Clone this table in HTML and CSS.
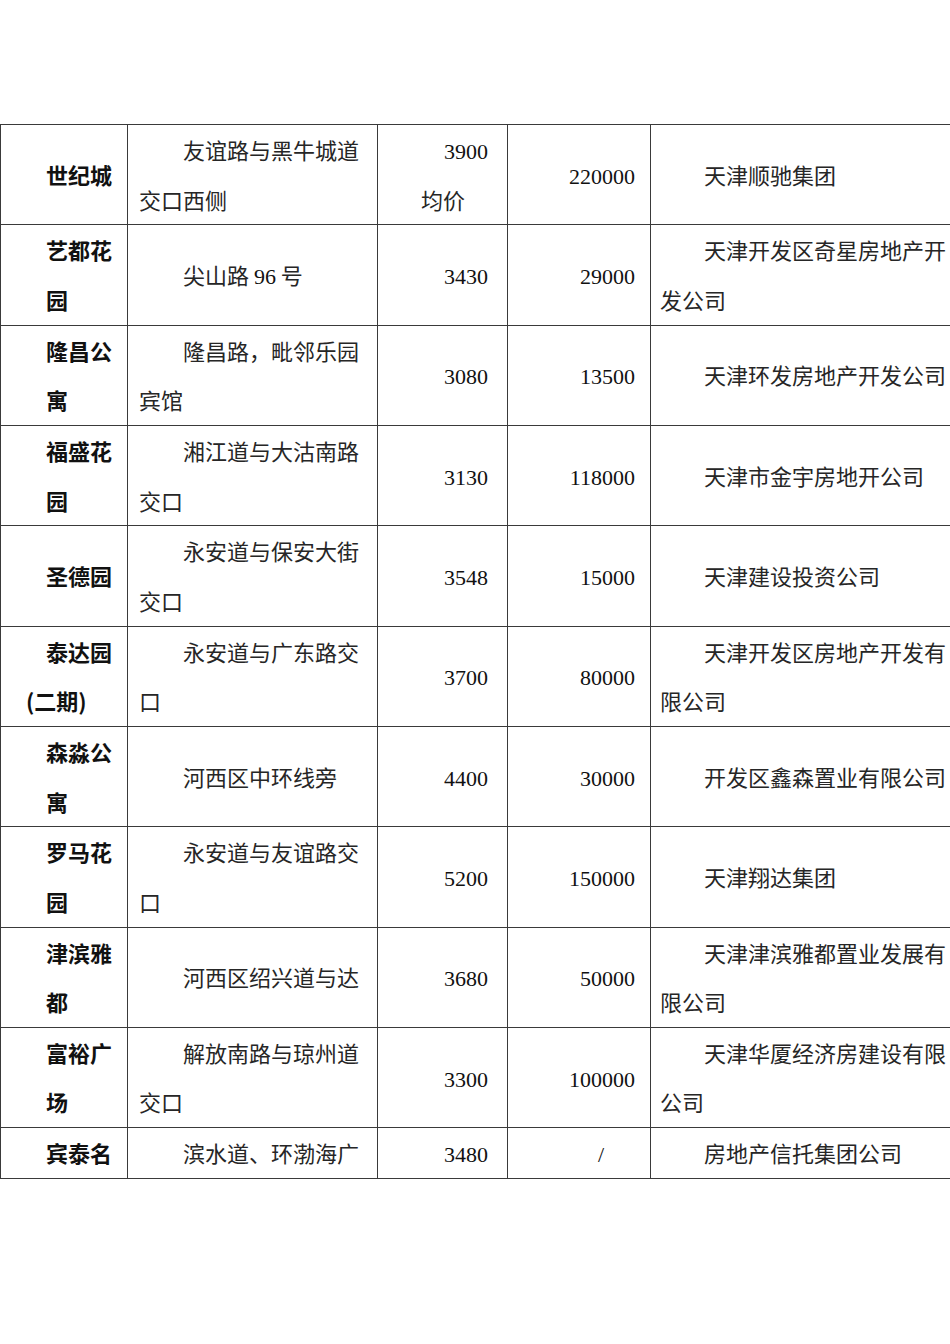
FILE: index.html
```html
<!DOCTYPE html>
<html lang="zh-CN">
<head>
<meta charset="utf-8">
<title>天津楼盘一览</title>
<link rel="stylesheet" href="styles.css">
</head>
<body>
<table class="sheet">
  <colgroup>
    <col class="c-name">
    <col class="c-addr">
    <col class="c-price">
    <col class="c-area">
    <col class="c-dev">
  </colgroup>
  <tbody>
    <tr>
      <td class="name">世纪城</td>
      <td class="addr">友谊路与黑牛城道交口西侧</td>
      <td class="price"><span class="n">3900</span><span class="unit">均价</span></td>
      <td class="area"><span class="n">220000</span></td>
      <td class="dev">天津顺驰集团</td>
    </tr>
    <tr>
      <td class="name">艺都花园</td>
      <td class="addr">尖山路 <span class="n">96</span> 号</td>
      <td class="price"><span class="n">3430</span></td>
      <td class="area"><span class="n">29000</span></td>
      <td class="dev">天津开发区奇星房地产开发公司</td>
    </tr>
    <tr>
      <td class="name">隆昌公寓</td>
      <td class="addr">隆昌路，毗邻乐园宾馆</td>
      <td class="price"><span class="n">3080</span></td>
      <td class="area"><span class="n">13500</span></td>
      <td class="dev">天津环发房地产开发公司</td>
    </tr>
    <tr>
      <td class="name">福盛花园</td>
      <td class="addr">湘江道与大沽南路交口</td>
      <td class="price"><span class="n">3130</span></td>
      <td class="area"><span class="n">118000</span></td>
      <td class="dev">天津市金宇房地开公司</td>
    </tr>
    <tr>
      <td class="name">圣德园</td>
      <td class="addr">永安道与保安大街交口</td>
      <td class="price"><span class="n">3548</span></td>
      <td class="area"><span class="n">15000</span></td>
      <td class="dev">天津建设投资公司</td>
    </tr>
    <tr>
      <td class="name">泰达园<br><span class="pull">(二期)</span></td>
      <td class="addr">永安道与广东路交口</td>
      <td class="price"><span class="n">3700</span></td>
      <td class="area"><span class="n">80000</span></td>
      <td class="dev">天津开发区房地产开发有限公司</td>
    </tr>
    <tr>
      <td class="name">森淼公寓</td>
      <td class="addr">河西区中环线旁</td>
      <td class="price"><span class="n">4400</span></td>
      <td class="area"><span class="n">30000</span></td>
      <td class="dev">开发区鑫森置业有限公司</td>
    </tr>
    <tr>
      <td class="name">罗马花园</td>
      <td class="addr">永安道与友谊路交口</td>
      <td class="price"><span class="n">5200</span></td>
      <td class="area"><span class="n">150000</span></td>
      <td class="dev">天津翔达集团</td>
    </tr>
    <tr>
      <td class="name">津滨雅都</td>
      <td class="addr">河西区绍兴道与达</td>
      <td class="price"><span class="n">3680</span></td>
      <td class="area"><span class="n">50000</span></td>
      <td class="dev">天津津滨雅都置业发展有限公司</td>
    </tr>
    <tr>
      <td class="name">富裕广场</td>
      <td class="addr">解放南路与琼州道交口</td>
      <td class="price"><span class="n">3300</span></td>
      <td class="area"><span class="n">100000</span></td>
      <td class="dev">天津华厦经济房建设有限公司</td>
    </tr>
    <tr>
      <td class="name">宾泰名</td>
      <td class="addr">滨水道、环渤海广</td>
      <td class="price"><span class="n">3480</span></td>
      <td class="area slash"><span class="n">/</span></td>
      <td class="dev">房地产信托集团公司</td>
    </tr>
  </tbody>
</table>
</body>
</html>
```

FILE: styles.css
```css
html {
  overflow: hidden;
  background: #ffffff;
}

body {
  margin: 0;
  padding-top: 124px;
  font-family: "Noto Sans CJK SC", "Liberation Serif", serif;
  font-size: 22px;
  color: #262626;
}

.sheet {
  border-collapse: collapse;
  table-layout: fixed;
  width: 960px;
}

.c-name { width: 127px; }
.c-addr { width: 250px; }
.c-price { width: 130px; }
.c-area { width: 143px; }
.c-dev { width: 310px; }

.sheet td {
  border: 1px solid #3a3a3a;
  padding: 0;
  line-height: 49.65px;
  vertical-align: middle;
  word-break: break-all;
}

.sheet .name {
  font-family: "Noto Sans CJK SC", "Liberation Sans", sans-serif;
  font-weight: bold;
  color: #111111;
  padding-left: 45px;
  padding-right: 12px;
}

.pull {
  margin-left: -20px;
}

.sheet .addr {
  padding-left: 11px;
  padding-right: 8px;
  text-indent: 44px;
}

.sheet .price {
  text-align: right;
  padding-left: 11px;
  padding-right: 19px;
}

.unit {
  display: block;
  text-align: left;
  padding-left: 32px;
}

.sheet .area {
  text-align: right;
  padding-left: 10px;
  padding-right: 15px;
}

.sheet .slash {
  padding-right: 46px;
}

.sheet .dev {
  padding-left: 9px;
  padding-right: 6px;
  text-indent: 44px;
}

.n {
  font-family: "Liberation Serif", serif;
  color: #111111;
  line-height: 0;
}
```
